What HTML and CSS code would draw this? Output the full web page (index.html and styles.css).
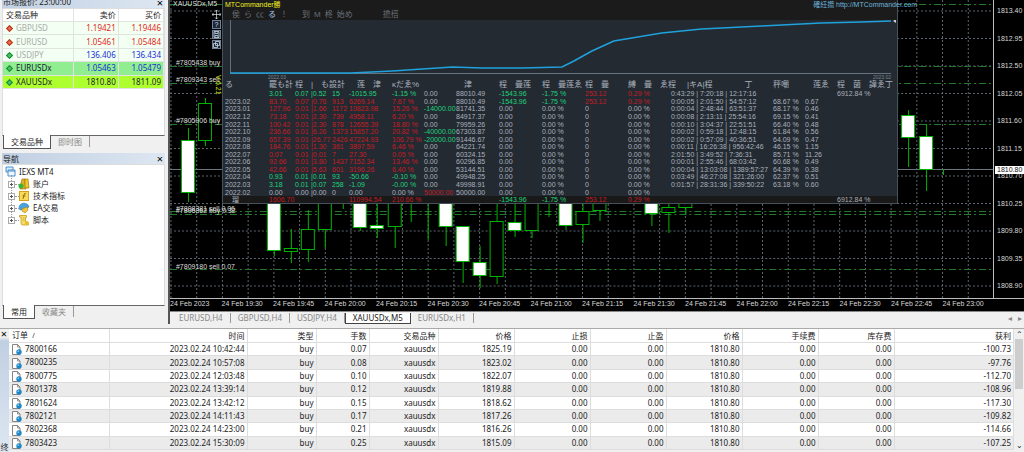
FILE: index.html
```html
<!DOCTYPE html>
<html lang="zh-CN">
<head>
  <meta charset="UTF-8">
  <meta name="viewport" content="width=device-width, initial-scale=1.0">
  <title>IEXS MT4</title>
  <link rel="stylesheet" href="styles.css">
</head>
<body>
  <div class="workspace">
    <aside class="sidebar">
      <section class="panel market">
        <header class="panel-title market-title"><span>市场报价: 23:00:00</span><button class="close" aria-label="关闭市场报价">×</button></header>
        <div class="panel-body">
          <table class="quotes">
            <thead><tr><th>交易品种</th><th>卖价</th><th>买价</th></tr></thead>
            <tbody>
              <tr class="down"><td><i class="tick"></i>GBPUSD</td><td>1.19421</td><td>1.19446</td></tr>
              <tr class="down"><td><i class="tick"></i>EURUSD</td><td>1.05461</td><td>1.05484</td></tr>
              <tr class="up"><td><i class="tick"></i>USDJPY</td><td>136.406</td><td>136.434</td></tr>
              <tr class="up active"><td><i class="tick"></i>EURUSDx</td><td>1.05463</td><td>1.05479</td></tr>
              <tr class="up lime"><td><i class="tick"></i>XAUUSDx</td><td>1810.80</td><td>1811.09</td></tr>
            </tbody>
          </table>
        </div>
        <nav class="panel-tabs"><button class="on">交易品种</button><button>即时图</button></nav>
      </section>

      <section class="panel navigator">
        <header class="panel-title"><span>导航</span><button class="close" aria-label="关闭导航">×</button></header>
        <div class="panel-body">
          <ul class="tree">
            <li class="root">
              <svg width="11" height="11" viewBox="0 0 11 11"><path d="M1 1h7v5H1z" fill="#d8ecfb" stroke="#4a90cc"/><path d="M3 4h7v6H3z" fill="#eef7ff" stroke="#4a90cc"/><path d="M3 5h7" stroke="#4a90cc"/></svg>
              IEXS MT4
            </li>
            <li><i class="plus"></i>
              <svg width="12" height="12" viewBox="0 0 12 12"><path d="M4 1h3v4l1 6H2l1-6z" fill="#e0b020" stroke="#a47810" stroke-width=".7"/><path d="M7 1h3l1 9H7z" fill="#f0c530" stroke="#a47810" stroke-width=".7"/><circle cx="3" cy="8" r="2.5" fill="#35b535"/></svg>
              账户
            </li>
            <li><i class="plus"></i>
              <svg width="12" height="12" viewBox="0 0 12 12"><rect x="1.500" y="1.500" width="9" height="9" fill="#f8dc58" stroke="#d0a020"/><path d="M8 3.500q-2-.5-2 1.500L5 9M4.500 6h3" fill="none" stroke="#9a6a10"/></svg>
              技术指标
            </li>
            <li><i class="plus"></i>
              <svg width="12" height="12" viewBox="0 0 12 12"><path d="M1 6q0-4 5-5 5 1 5 4l-4 2-5 1z" fill="#4aa3dd" stroke="#2a78b0" stroke-width=".6"/><path d="M4 7l5-2 1 3-3 3-3-2z" fill="#f0c840" stroke="#a88018" stroke-width=".6"/></svg>
              EA交易
            </li>
            <li><i class="plus"></i>
              <svg width="12" height="12" viewBox="0 0 12 12"><path d="M1.500 1.500h7v2h-1v6h3v1.500h-6q-1.500 0-1.500-2v-6h-1.500z" fill="#f6dc6a" stroke="#c79a20" stroke-width=".8"/><path d="M4.500 4h2M4.500 6h2" stroke="#c79a20" stroke-width=".7"/><circle cx="9" cy="9" r="2" fill="#efc02a"/></svg>
              脚本
            </li>
          </ul>
        </div>
        <nav class="panel-tabs"><button class="on">常用</button><button>收藏夹</button></nav>
      </section>
    </aside>

    <main class="main">
      <div class="chart">
        <div class="plot">
          <svg class="plot-svg" id="plot" viewBox="0 0 824 299" preserveAspectRatio="none"></svg>
          <div class="prices" id="prices"></div>
        </div>
        <div class="times" id="times"></div>

        <div class="tools">
          <button aria-label="移动"><svg width="9" height="9" viewBox="0 0 9 9"><path d="M4.500 0v9M0 4.500h9M3 1.500L4.500 0 6 1.500M3 7.500L4.500 9 6 7.500M1.500 3L0 4.500 1.500 6M7.500 3L9 4.500 7.500 6" fill="none" stroke="#ccd2d8" stroke-width=".8"/></svg></button>
          <button class="boxed">?</button>
          <button class="boxed" aria-label="保存"><svg width="7" height="7" viewBox="0 0 7 7"><path d="M1 .5h5v6H1zM2 .5v2h3v-2M2 6.500v-2h3v2" fill="none" stroke="#b9c6d6" stroke-width=".9"/></svg></button>
          <button class="boxed" aria-label="窗口"><svg width="7" height="7" viewBox="0 0 7 7"><path d="M2.500.5h4v4h-4zM.5 2.500h4v4h-4z" fill="none" stroke="#b9c6d6" stroke-width=".9"/></svg></button>
        </div>
        <div class="version">V.6.21</div>

        <section class="report">
          <header class="report-head">
            <div class="report-title"><b>MTCommander勝</b><a href="#">確紝擶 http://MTCommander.com</a></div>
            <div class="report-menu"><span>侯</span><span>ら</span><span>㏄</span><span class="on">る</span><span>！</span><span class="gap">到</span><span>M</span><span>柊</span><span>始め</span><span class="far">擔搭</span></div>
          </header>
          <svg class="equity" viewBox="0 0 676 55" preserveAspectRatio="none">
            <path d="M7.500 0V53.500H670" fill="none" stroke="#66727e"/>
            <polyline points="7,53 128,53 170,51 200,49 230,47 260,48 300,48 340,47 352,41 370,31 392,21 440,13 480,9 540,6 600,3 640,2 670,1" fill="none" stroke="#1fa2dc" stroke-width="1.500"/>
            <path d="M672 1l3-2v4z" fill="#ccd2d8"/>
          </svg>
          <div class="equity-dates"><span>2022.03</span><span>2023.02</span></div>
          <table class="stats">
            <colgroup><col class="c-date"><col class="c-lot"><col class="c-min"><col class="c-max"><col class="c-count"><col class="c-sum"><col class="c-pct"><col class="c-pct"><col class="c-sum"><col class="c-sum"><col class="c-sum"><col class="c-sum"><col class="c-sum"><col class="c-time"><col class="c-pct"><col class="c-pct"><col></colgroup>
            <thead id="statsHead"></thead>
            <tbody id="stats"></tbody>
            <tfoot id="statsFoot"></tfoot>
          </table>
        </section>
      </div>
      <nav class="chart-tabs">
        <button>EURUSD,H4</button><button>GBPUSD,H4</button><button>USDJPY,H4</button><button class="on">XAUUSDx,M5</button><button>EURUSDx,H1</button>
        <span class="arrows">◂ &nbsp; ▸</span>
      </nav>
    </main>
  </div>

  <section class="terminal">
    <div class="terminal-side"><button class="close" aria-label="关闭终端">×</button><span>终端</span></div>
    <table class="orders">
      <colgroup><col class="o-id"><col class="o-time"><col class="o-type"><col class="o-lots"><col class="o-type"><col class="o-price"><col class="o-price"><col class="o-price"><col class="o-price"><col class="o-price"><col class="o-price"><col></colgroup>
      <thead><tr><th>订单 &nbsp;<small>/</small></th><th>时间</th><th>类型</th><th>手数</th><th>交易品种</th><th>价格</th><th>止损</th><th>止盈</th><th>价格</th><th>手续费</th><th>库存费</th><th>获利</th></tr></thead>
      <tbody id="orders"></tbody>
    </table>
    <div class="scroll"><span>⌃</span><i></i><span>⌄</span></div>
  </section>

  <script>
    const line = (x1, y1, x2, y2, cls) => `<line x1="${x1}" y1="${y1}" x2="${x2}" y2="${y2}" class="${cls}"/>`;

    // x centre, body top, body bottom, wick top, wick bottom, filled
    const candles = [
      [18, 140, 192, 128, 202, 1], [35, 103, 140, 98, 146, 0],
      [104, 190, 250, 190, 256, 1], [121, 248, 251, 229, 263, 0], [138, 229, 249, 210, 262, 0],
      [155, 190, 229, 190, 248, 0], [173, 190, 200, 190, 209, 0], [190, 190, 227, 190, 231, 1],
      [207, 225, 228, 200, 238, 1], [225, 190, 226, 190, 248, 0], [241, 190, 200, 190, 222, 0],
      [258, 190, 203, 190, 240, 0], [276, 190, 226, 190, 246, 1], [293, 226, 261, 226, 283, 1],
      [310, 262, 275, 246, 288, 1], [327, 221, 276, 203, 284, 0], [345, 222, 230, 200, 237, 1],
      [362, 190, 230, 190, 238, 0], [379, 190, 200, 190, 217, 0], [396, 190, 225, 190, 230, 1],
      [413, 211, 224, 203, 243, 0], [430, 190, 210, 190, 221, 0], [482, 190, 213, 190, 226, 1],
      [499, 207, 212, 200, 233, 0], [516, 190, 207, 190, 214, 0], [722, 90, 110, 90, 116, 0],
      [739, 115, 137, 110, 167, 1], [757, 136, 169, 124, 191, 1], [774, 169, 169, 169, 175, 0]
    ];
    let svg = '';
    for (let i = 0; i < 32; i++) svg += line(1 + i * 25.75, 0, 1 + i * 25.75, 299, 'grid');
    for (let i = 0; i < 11; i++) svg += line(0, 11 + i * 27.5, 824, 11 + i * 27.5, 'grid');
    [4.5, 66.5, 83.5, 124.5, 211.5, 214.5, 269.5].forEach(y => svg += line(0, y, 824, y, 'level'));
    svg += line(0, 169.5, 824, 169.5, 'bid');
    candles.forEach(([x, top, bottom, high, low, full]) => {
      svg += line(x + 0.5, high, x + 0.5, low, 'wick');
      svg += `<rect x="${x - 6.5}" y="${top + 0.5}" width="13" height="${bottom - top}" class="${full ? 'body full' : 'body'}"/>`;
    });
    [[3, 'XAUUSDx,M5', 6], [6, '#7805438 buy', 65], [6, '#7809343 sell', 82], [6, '#7805906 buy', 123],
     [6, '#7808381 sell 0.06', 211], [6, '#7806362 buy 0.32', 213], [6, '#7809180 sell 0.07', 269]]
      .forEach(([x, text, y]) => svg += `<text x="${x}" y="${y}">${text}</text>`);
    document.getElementById('plot').innerHTML = svg;

    const prices = ['1813.40', '1812.95', '1812.50', '1812.05', '1811.60', '1811.15', '1810.70', '1810.25', '1809.80', '1809.35', '1808.90'];
    document.getElementById('prices').innerHTML = prices.map(p => `<span>${p}</span>`).join('') + '<b>1810.80</b>';

    const times = ['2023', '19:30', '19:45', '20:00', '20:15', '20:30', '20:45', '21:00', '21:15', '21:30', '21:45', '22:00', '22:15', '22:30', '22:45', '23:00'];
    document.getElementById('times').innerHTML = times.map(t => `<span>24 Feb ${t}</span>`).join('');

    const head = ['る', '罷も計', '程', '|　も設計', '', '　莲　津', 'κだゑ%', '', '　津', '程　疊莲', '程　疊莲ゑ', '程　疊', '縛　疊　ゑ程', '　　|キA|程　　　　丁', '秤嘲', '　莲ゑ', '程　菌　諱ゑ丁'];
    // month, avg, min lot, max lot, trades, profit, percent, deposit, balance, dd, dd %, open, open %, durations, win %, factor, growth, row colour
    const stats = [
      ['', '3.01', '0.07', '|0.52', '15', '-1015.95', '-1.15 %', '0.00', '88010.49', '-1543.96', '-1.75 %', '253.12', '0.29 %', '0:43:29 | 7:20:18 | 12:17:16', '', '', '6912.84 %', 'g'],
      ['2023.02', '83.70', '0.07', '|0.76', '913', '6269.14', '7.67 %', '0.00', '88010.49', '-1543.96', '-1.75 %', '253.12', '0.29 %', '0:00:05 | 2:01:50 | 54:57:12', '68.67 %', '0.67', '', 'r'],
      ['2023.01', '127.96', '0.01', '|1.66', '1172', '10823.98', '15.26 %', '-14000.00', '81741.35', '0.00', '0.00 %', '0', '0.00 %', '0:00:04 | 2:48:44 | 63:51:37', '68.17 %', '0.46', '', 'r'],
      ['2022.12', '73.18', '0.01', '|2.30', '739', '4958.11', '6.20 %', '0.00', '84917.37', '0.00', '0.00 %', '0', '0.00 %', '0:00:08 | 2:13:11 | 25:54:16', '69.15 %', '0.41', '', 'r'],
      ['2022.11', '100.42', '0.01', '|2.30', '878', '12655.39', '18.80 %', '0.00', '79959.26', '0.00', '0.00 %', '0', '0.00 %', '0:00:10 | 3:04:37 | 22:51:51', '66.40 %', '0.48', '', 'r'],
      ['2022.10', '236.66', '0.01', '|6.26', '1373', '15857.20', '20.82 %', '-40000.00', '67303.87', '0.00', '0.00 %', '0', '0.00 %', '0:00:02 | 0:59:18 | 12:48:15', '61.84 %', '0.56', '', 'r'],
      ['2022.09', '657.39', '0.01', '|26.77', '2426', '47224.93', '106.79 %', '-20000.00', '91446.67', '0.00', '0.00 %', '0', '0.00 %', '0:00:02 | 0:57:09 | 40:36:51', '64.09 %', '0.47', '', 'r'],
      ['2022.08', '184.76', '0.01', '|1.30', '361', '3897.59', '6.46 %', '0.00', '64221.74', '0.00', '0.00 %', '0', '0.00 %', '0:00:11 | 16:26:38 | 956:42:46', '46.15 %', '1.15', '', 'r'],
      ['2022.07', '0.07', '0.01', '|0.01', '7', '27.30', '0.05 %', '0.00', '60324.15', '0.00', '0.00 %', '0', '0.00 %', '2:01:50 | 3:49:52 | 7:36:31', '85.71 %', '11.26', '', 'r'],
      ['2022.06', '92.66', '0.01', '|3.80', '1437', '7152.34', '13.46 %', '0.00', '60296.85', '0.00', '0.00 %', '0', '0.00 %', '0:00:01 | 2:55:46 | 68:03:42', '60.68 %', '0.49', '', 'r'],
      ['2022.05', '42.66', '0.01', '|5.63', '601', '3196.26', '6.40 %', '0.00', '53144.51', '0.00', '0.00 %', '0', '0.00 %', '0:00:04 | 13:03:08 | 1389:57:27', '64.39 %', '0.38', '', 'r'],
      ['2022.04', '0.93', '0.01', '|0.01', '93', '-50.66', '-0.10 %', '0.00', '49948.25', '0.00', '0.00 %', '0', '0.00 %', '0:03:49 | 46:27:08 | 321:26:00', '62.37 %', '0.51', '', 'g'],
      ['2022.03', '3.18', '0.01', '|0.07', '258', '-1.09', '-0.00 %', '0.00', '49998.91', '0.00', '0.00 %', '0', '0.00 %', '0:01:57 | 28:31:36 | 339:50:22', '63.18 %', '0.60', '', 'g'],
      ['2022.02', '0.00', '0.00', '|0.00', '0', '0.00', '0.00 %', '50000.00', '50000.00', '0.00', '0.00 %', '0', '0.00 %', '', '', '', '', '']
    ];
    const total = ['　瑠', '1606.70', '', '', '', '110994.54', '210.66 %', '', '', '-1543.96', '-1.75 %', '253.12', '0.29 %', '', '', '', '6912.84 %', 'r'];

    function cellClass(i, v, tone) {
      if (i >= 1 && i <= 6) return tone;
      if (i === 7 && v && v !== '0.00') return v[0] === '-' ? 'g' : 'r';
      if (v[0] === '-') return 'g';
      return v === '253.12' || v === '0.29 %' ? 'r' : '';
    }
    function statRow(row) {
      return '<tr>' + row.slice(0, 17).map((v, i) => `<td class="${cellClass(i, v, row[17])}">${v}</td>`).join('') + '</tr>';
    }
    document.getElementById('statsHead').innerHTML = '<tr>' + head.map(h => `<th>${h}</th>`).join('') + '</tr>';
    document.getElementById('stats').innerHTML = stats.map(statRow).join('');
    document.getElementById('statsFoot').innerHTML = statRow(total);

    const orders = [
      ['7800166', '10:42:44', '0.07', '1825.19', '-100.73'],
      ['7800235', '10:57:08', '0.08', '1823.02', '-97.76'],
      ['7800775', '12:03:48', '0.10', '1822.07', '-112.70'],
      ['7801378', '13:39:14', '0.12', '1819.88', '-108.96'],
      ['7801624', '13:42:12', '0.15', '1818.62', '-117.30'],
      ['7802121', '14:11:43', '0.17', '1817.26', '-109.82'],
      ['7802368', '14:23:00', '0.21', '1816.26', '-114.66'],
      ['7803423', '15:30:09', '0.25', '1815.09', '-107.25']
    ];
    const icon = '<svg width="10" height="11" viewBox="0 0 10 11"><path d="M.5.5h5L8 3v7.500H.5z" fill="#fff" stroke="#777" stroke-width=".9"/><path d="M5.500.5V3H8" fill="none" stroke="#777" stroke-width=".8"/><circle cx="7" cy="8" r="2.700" fill="#1f86c4"/><circle cx="6.300" cy="7.200" r=".9" fill="#7cc8ee"/></svg>';
    document.getElementById('orders').innerHTML = orders.map(([id, time, lots, price, profit]) =>
      `<tr><td>${icon}${id}</td><td>2023.02.24 ${time}</td><td>buy</td><td>${lots}</td><td>xauusdx</td><td>${price}</td><td>0.00</td><td>0.00</td><td>1810.80</td><td>0.00</td><td>0.00</td><td>${profit}</td></tr>`).join('');
  </script>
</body>
</html>
```
FILE: styles.css
```css
* {
  box-sizing: border-box;
}
body {
  display: flex;
  flex-direction: column;
  height: 100vh;
  margin: 0;
  overflow: hidden;
  background: #f0f0f0;
  color: #222;
  font: 8px/12px "Noto Sans", "Noto Sans CJK SC", sans-serif;
}
button {
  margin: 0;
  padding: 0;
  border: 0;
  background: none;
  color: inherit;
  font: inherit;
  cursor: pointer;
}
table {
  border-collapse: collapse;
  table-layout: fixed;
  width: 100%;
}
th, td {
  padding: 0;
  font-weight: normal;
  text-align: left;
  white-space: pre;
}
.workspace {
  display: grid;
  grid-template-columns: 170px 1fr;
  height: 324px;
}

/* sidebar */
.sidebar {
  display: flex;
  flex-direction: column;
  gap: 3px;
  padding: 0 3px 4px 2px;
  border-right: 2px solid #555;
}
.panel {
  display: flex;
  flex-direction: column;
}
.market {
  height: 150px;
}
.navigator {
  flex: 1;
}
.panel-title {
  display: flex;
  justify-content: space-between;
  align-items: center;
  height: 11px;
  padding: 0 1px;
  background: linear-gradient(90deg, #c0cfe2, #dde7f2);
}
.market-title {
  align-items: flex-end;
  height: 8px;
}
.close {
  width: 8px;
  font-size: 11px;
  line-height: 10px;
  color: #000;
}
.panel-body {
  flex: 1;
  border: 1px solid #ddd;
  border-bottom-color: #666;
  background: #fff;
}
.quotes {
  height: 80px;
}
.quotes th, .quotes td {
  border-bottom: 1px solid #dfe4df;
  border-right: 1px solid #dfe4df;
  text-align: right;
  padding-right: 2px;
}
.quotes th:first-child, .quotes td:first-child {
  width: 70px;
  padding-left: 3px;
  text-align: left;
}
.quotes td {
  background: #f3fff3;
}
.quotes .down {
  color: #e02818;
}
.quotes .up {
  color: #1830d8;
}
.quotes td:first-child {
  color: #aaa;
}
.quotes .active td {
  background: #90ee90;
}
.quotes .lime td {
  background: #adff2f;
  color: #223;
}
.quotes .active td:first-child {
  color: #123;
}
.tick {
  display: inline-block;
  width: 5px;
  height: 5px;
  margin: 0 4px 0 1px;
  transform: rotate(45deg);
  border: 1px solid #b5371e;
  background: #e86a50;
}
.up .tick {
  border-color: #178a35;
  background: #4cc465;
}
.panel-tabs {
  display: flex;
  height: 14px;
  padding-left: 1px;
  color: #888;
}
.panel-tabs button {
  padding: 0 7px;
  border-right: 1px solid #999;
  line-height: 8px;
  margin-bottom: 3px;
}
.panel-tabs .on {
  margin: -1px 0 1px;
  border: 1px solid #555;
  border-top: 0;
  background: #fff;
  color: #222;
}
.tree {
  margin: 0;
  padding: 0 0 0 5px;
  list-style: none;
}
.tree li {
  display: flex;
  align-items: center;
  gap: 3px;
  height: 12px;
}
.tree .root {
  margin-left: -3px;
  height: 13px;
}
.plus {
  position: relative;
  width: 7px;
  height: 7px;
  border: 1px solid #aaa;
  background: linear-gradient(#555, #555) center / 3px 1px no-repeat, linear-gradient(#555, #555) center / 1px 3px no-repeat, #fff;
}
.plus::before {
  content: "";
  position: absolute;
  left: 2px;
  top: -7px;
  height: 6px;
  border-left: 1px dotted #999;
}
.plus::after {
  content: "";
  position: absolute;
  left: 6px;
  top: 2px;
  width: 4px;
  border-top: 1px dotted #999;
}

/* chart */
.main {
  display: flex;
  flex-direction: column;
  min-width: 0;
}
.chart {
  position: relative;
  flex: 1;
  overflow: hidden;
  background: #000;
  color: #d8d8d8;
  font: 7px/10px "Liberation Sans", "Noto Sans CJK JP", sans-serif;
}
.plot {
  display: grid;
  grid-template-columns: 1fr 30px;
  height: 299px;
  border-bottom: 1px solid #bbb;
}
.plot-svg {
  display: block;
  width: 100%;
  height: 299px;
  border-right: 1px solid #bbb;
}
.plot-svg text {
  fill: #ddd;
  font-size: 7px;
}
.grid {
  stroke: #5d6670;
  stroke-width: 1;
  stroke-dasharray: 2 2;
}
.level {
  stroke: #237a2c;
  stroke-width: 1;
  stroke-dasharray: 7 3 2 3;
}
.bid {
  stroke: #68747e;
}
.wick {
  stroke: #00b400;
}
.body {
  fill: #000;
  stroke: #00b400;
}
.full {
  fill: #fff;
}
.prices {
  position: relative;
  display: flex;
  flex-direction: column;
  justify-content: space-between;
  padding: 6px 0 7px 3px;
  height: 298px;
}
.prices b {
  position: absolute;
  top: 166px;
  left: 1px;
  right: 0;
  padding-left: 2px;
  line-height: 8px;
  background: #fff;
  color: #111;
  font-weight: normal;
}
.times {
  display: grid;
  grid-template-columns: repeat(16, minmax(0, 1fr));
  margin-right: 30px;
  white-space: nowrap;
}
.tools {
  position: absolute;
  top: 10px;
  left: 42px;
  display: flex;
  flex-direction: column;
  align-items: center;
  gap: 1px;
}
.tools button {
  display: flex;
  justify-content: center;
  align-items: center;
  width: 9px;
  height: 9px;
}
.tools .boxed {
  border: 1px solid #71839a;
  background: #1d2836;
  color: #dde;
}
.version {
  position: absolute;
  top: 75px;
  left: 43px;
  writing-mode: vertical-rl;
  color: #d8e020;
}
.report {
  position: absolute;
  top: 0;
  left: 52px;
  right: 126px;
  height: 204px;
  border: 1px solid #46515c;
  border-top: 0;
  background: #242a32;
  color: #a9b2bd;
  line-height: 7px;
}
.report-head {
  height: 20px;
  padding: 0 0 0 2px;
  background: #1b1b1b;
}
.report-title {
  display: flex;
  justify-content: space-between;
  line-height: 9px;
}
.report-title b {
  color: #f0ee20;
  font-weight: normal;
}
.report-title a {
  color: #6cb4dc;
  text-decoration: none;
  margin-right: -20px;
}
.report-menu {
  display: flex;
  gap: 4px;
  padding: 2px 0 0 7px;
  color: #68707a;
  font-size: 8px;
}
.report-menu .on {
  color: #a8c8e8;
}
.report-menu .gap {
  margin-left: 10px;
}
.report-menu .far {
  margin-left: 26px;
}
.equity {
  display: block;
  width: 100%;
  height: 55px;
}
.equity-dates {
  display: flex;
  justify-content: space-between;
  padding: 0 6px 0 45px;
  height: 4px;
  font-size: 5px;
  line-height: 4px;
  color: #7c8690;
}
.stats {
  height: 124px;
}
.stats th {
  font-size: 8px;
  height: 11px;
}
.stats th:first-child, .stats td:first-child {
  padding-left: 2px;
}
.stats tfoot {
  background: #191919;
}
.stats .g {
  color: #1ed27c;
}
.stats .r {
  color: #c41c24;
}
.c-date {
  width: 46px;
}
.c-lot {
  width: 26px;
}
.c-min {
  width: 16px;
}
.c-max {
  width: 21px;
}
.c-count {
  width: 17px;
}
.c-sum {
  width: 43px;
}
.c-pct {
  width: 32px;
}
.c-time {
  width: 102px;
}

/* chart tabs */
.chart-tabs {
  display: flex;
  align-items: center;
  height: 13px;
  padding-left: 2px;
  border-top: 1px solid #888;
  color: #888;
}
.chart-tabs button {
  padding: 0 7px;
  border-right: 1px solid #999;
  line-height: 10px;
}
.chart-tabs .on {
  border: 1px solid #444;
  border-top: 0;
  background: #fff;
  color: #222;
}
.arrows {
  margin-left: auto;
  padding-right: 2px;
}

/* terminal */
.terminal {
  flex: 1;
  display: grid;
  grid-template-columns: 9px 1fr 10px;
  margin-top: 4px;
  border-top: 1px solid #aaa;
  min-height: 0;
}
.terminal-side {
  display: flex;
  flex-direction: column;
  justify-content: space-between;
  overflow: hidden;
  background: linear-gradient(#f0f0f0 8px, #c0cfe2 12px, #dde7f2);
}
.terminal-side span {
  height: 9px;
  writing-mode: vertical-rl;
  line-height: 9px;
}
.orders {
  height: 121px;
  background: #fff;
  border-bottom: 1px solid #888;
}
.orders th, .orders td {
  padding-right: 2px;
  border-right: 1px solid #ddd;
  border-bottom: 1px solid #ddd;
  text-align: right;
}
.orders th:first-child, .orders td:first-child {
  padding-left: 3px;
  text-align: left;
}
.orders tbody tr:nth-child(even) {
  background: #ebebeb;
}
.orders td svg {
  margin-right: 3px;
  vertical-align: middle;
}
.o-id {
  width: 100px;
}
.o-time {
  width: 138px;
}
.o-type {
  width: 69px;
}
.o-lots {
  width: 53px;
}
.o-price {
  width: 76px;
}
.scroll {
  display: flex;
  flex-direction: column;
  align-items: center;
  height: 121px;
  line-height: 10px;
}
.scroll i {
  width: 8px;
  height: 50px;
  margin-bottom: auto;
  background: #cdcdcd;
}
```
